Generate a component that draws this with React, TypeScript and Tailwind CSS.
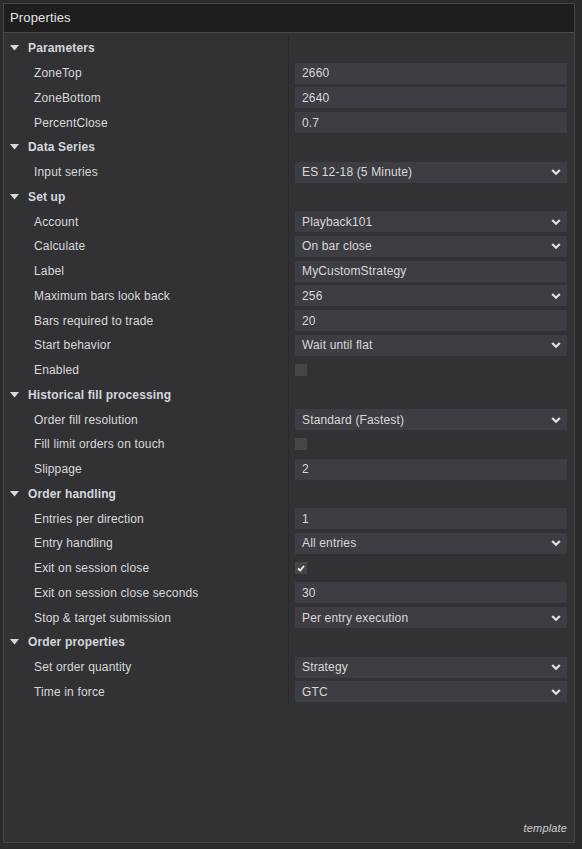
import React from 'react';

type Row =
  | { kind: 'text'; label: string; value: string }
  | { kind: 'select'; label: string; value: string }
  | { kind: 'check'; label: string; checked?: boolean };

type Section = { title: string; rows: Row[] };

const sections: Section[] = [
  {
    title: 'Parameters',
    rows: [
      { kind: 'text', label: 'ZoneTop', value: '2660' },
      { kind: 'text', label: 'ZoneBottom', value: '2640' },
      { kind: 'text', label: 'PercentClose', value: '0.7' },
    ],
  },
  {
    title: 'Data Series',
    rows: [{ kind: 'select', label: 'Input series', value: 'ES 12-18 (5 Minute)' }],
  },
  {
    title: 'Set up',
    rows: [
      { kind: 'select', label: 'Account', value: 'Playback101' },
      { kind: 'select', label: 'Calculate', value: 'On bar close' },
      { kind: 'text', label: 'Label', value: 'MyCustomStrategy' },
      { kind: 'select', label: 'Maximum bars look back', value: '256' },
      { kind: 'text', label: 'Bars required to trade', value: '20' },
      { kind: 'select', label: 'Start behavior', value: 'Wait until flat' },
      { kind: 'check', label: 'Enabled' },
    ],
  },
  {
    title: 'Historical fill processing',
    rows: [
      { kind: 'select', label: 'Order fill resolution', value: 'Standard (Fastest)' },
      { kind: 'check', label: 'Fill limit orders on touch' },
      { kind: 'text', label: 'Slippage', value: '2' },
    ],
  },
  {
    title: 'Order handling',
    rows: [
      { kind: 'text', label: 'Entries per direction', value: '1' },
      { kind: 'select', label: 'Entry handling', value: 'All entries' },
      { kind: 'check', label: 'Exit on session close', checked: true },
      { kind: 'text', label: 'Exit on session close seconds', value: '30' },
      { kind: 'select', label: 'Stop & target submission', value: 'Per entry execution' },
    ],
  },
  {
    title: 'Order properties',
    rows: [
      { kind: 'select', label: 'Set order quantity', value: 'Strategy' },
      { kind: 'select', label: 'Time in force', value: 'GTC' },
    ],
  },
];

const Chevron = () => (
  <svg width="10" height="8" viewBox="0 0 10 8" className="shrink-0">
    <path d="M1.2 2 L5 5.8 L8.8 2" fill="none" stroke="#e2e2e2" strokeWidth="2.2" />
  </svg>
);

const Triangle = () => (
  <svg width="9" height="6" viewBox="0 0 9 6" className="shrink-0">
    <path d="M0 0 H9 L4.5 5.5 Z" fill="#d6d8dc" />
  </svg>
);

const Value = ({ row }: { row: Row }) => {
  if (row.kind === 'check') {
    return (
      <div className="w-[12px] h-[12px] bg-[#45454a] flex items-center justify-center">
        {row.checked && (
          <svg width="8" height="7" viewBox="0 0 8 7">
            <path d="M1 3.5 L3.2 5.5 L7 1" fill="none" stroke="#f0f0f0" strokeWidth="1.8" />
          </svg>
        )}
      </div>
    );
  }
  return (
    <div className="h-[21px] w-[272px] bg-[#3d3d43] flex items-center justify-between pl-[7px] pr-[6px]">
      <span>{row.value}</span>
      {row.kind === 'select' && <Chevron />}
    </div>
  );
};

export default function App() {
  return (
    <div
      className="w-[582px] h-[849px] bg-[#2b2b2d] p-[3px] pr-[7px] pb-[6px] text-[12px] tracking-[0.15px] text-[#d9d9d9]"
      style={{ fontFamily: '"Liberation Sans", Arial, sans-serif' }}
    >
      <div className="h-full border border-[#454547] bg-[#323234] flex flex-col">
        <div className="h-[29px] bg-[#1e1e1f] border-b border-[#4a4a4c] flex items-center pl-[6px] text-[13px] text-[#e4e4e4]">
          Properties
        </div>
        <div className="flex-1 pt-[3px]">
          <div className="relative">
            <div className="absolute left-[284px] top-0 bottom-0 w-px bg-[#2a2a2c]" />
            {sections.map((s) => (
              <div key={s.title}>
                <div className="h-[24.75px] flex items-center pl-[6px] gap-[9px] font-bold text-[#d4d7dd]">
                  <Triangle />
                  <span>{s.title}</span>
                </div>
                {s.rows.map((r) => (
                  <div key={r.label} className="h-[24.75px] flex items-center">
                    <div className="w-[284px] pl-[30px]">{r.label}</div>
                    <div className="pl-[7px]">
                      <Value row={r} />
                    </div>
                  </div>
                ))}
              </div>
            ))}
          </div>
        </div>
        <div className="h-[22px] flex items-start justify-end pr-[7px] italic text-[11px] text-[#d0d0d0]">
          template
        </div>
      </div>
    </div>
  );
}
